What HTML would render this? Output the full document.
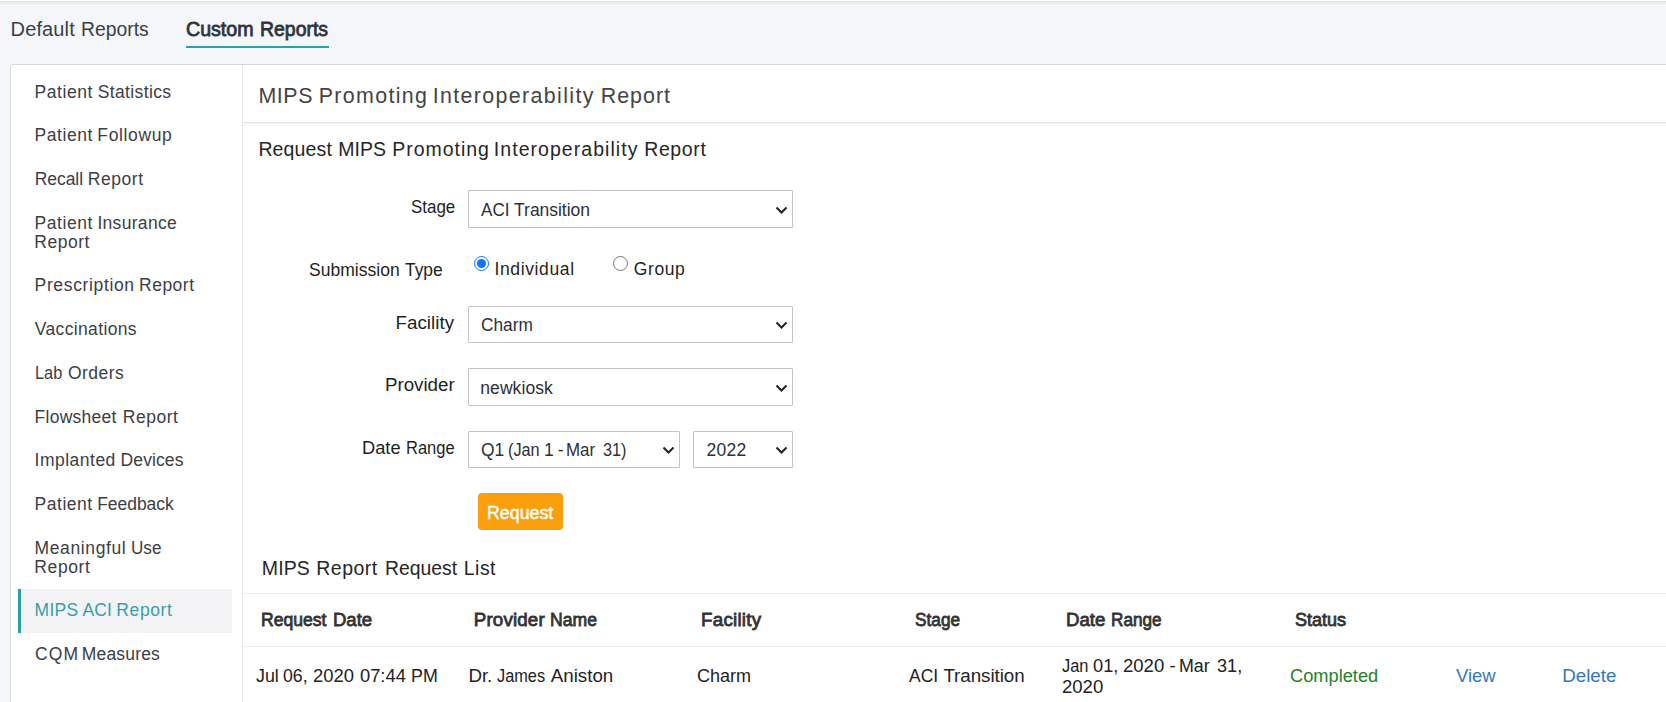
<!DOCTYPE html>
<html lang="en">
<head>
<meta charset="utf-8">
<title>MIPS Promoting Interoperability Report</title>
<style>
html,body{margin:0;padding:0}
body{width:1666px;height:702px;overflow:hidden;position:relative;background:#f4f6fa;font-family:"Liberation Sans",sans-serif}
.abs{position:absolute}
.t{position:absolute;white-space:nowrap;margin:0;padding:0;transform-origin:0 50%}
#topline{left:0;top:0;width:1666px;height:1px;background:#fff}
#topshadow{left:0;top:1px;width:1666px;height:3.5px;background:linear-gradient(#dddfe3,#e9ebef 45%,#f4f6fa)}
#tabline{left:186px;top:45.6px;width:143px;height:2.4px;background:#25a3a9}
#panel{left:10px;top:64px;width:1670px;height:660px;background:#fff;border:1px solid #d7d8da;border-radius:3px 0 0 0;box-sizing:border-box}
#sidediv{left:242px;top:65px;width:1px;height:640px;background:#e6e8eb}
#active{left:18px;top:589px;width:214px;height:44px;background:#f3f3f6;box-sizing:border-box;border-left:3px solid #27a0a6}
#hdrline{left:243px;top:122px;width:1423px;height:1px;background:#e4e4e5}
#hdrshadow{left:243px;top:123px;width:1423px;height:5px;background:linear-gradient(#f3f3f3,#f6f6f6 25%,#fafafa 50%,#fdfdfd 75%,#ffffff)}
.sel{position:absolute;box-sizing:border-box;border:1px solid #c3c3c3;border-radius:1px;background:#fff;height:38px}
.arr{position:absolute;width:13px;height:8px}
.radio{position:absolute;width:15px;height:15px;box-sizing:border-box;border-radius:50%;border:1px solid #767676;background:#fff}
.radio.on{border:1.5px solid #1473ff}
.radio.on::after{content:"";position:absolute;left:1.5px;top:1.5px;width:9px;height:9px;border-radius:50%;background:#1473ff}
#btn{left:478px;top:493px;width:85px;height:37px;background:#fb9f0c;border-radius:4px}
.tl{position:absolute;left:243px;width:1423px;height:1px;background:#ececec}
</style>
</head>
<body>
<div class="abs" id="topline"></div>
<div class="abs" id="topshadow"></div>
<div class="abs" id="tabline"></div>
<div class="abs" id="panel"></div>
<div class="abs" id="sidediv"></div>
<div class="abs" id="active"></div>
<div class="abs" id="hdrline"></div>
<div class="abs" id="hdrshadow"></div>

<div class="sel" style="left:468px;top:190px;width:325px"></div>
<div class="sel" style="left:468px;top:306px;width:325px;height:37px"></div>
<div class="sel" style="left:468px;top:368px;width:325px"></div>
<div class="sel" style="left:468px;top:431px;width:212px;height:37px"></div>
<div class="sel" style="left:693px;top:431px;width:100px;height:37px"></div>

<svg class="arr" style="left:774.5px;top:205.5px" viewBox="0 0 13 8"><path d="M1.5 1.5 L6.5 6.5 L11.5 1.5" fill="none" stroke="#222" stroke-width="2"/></svg>
<svg class="arr" style="left:774.5px;top:321px" viewBox="0 0 13 8"><path d="M1.5 1.5 L6.5 6.5 L11.5 1.5" fill="none" stroke="#222" stroke-width="2"/></svg>
<svg class="arr" style="left:774.5px;top:383.5px" viewBox="0 0 13 8"><path d="M1.5 1.5 L6.5 6.5 L11.5 1.5" fill="none" stroke="#222" stroke-width="2"/></svg>
<svg class="arr" style="left:661.7px;top:446px" viewBox="0 0 13 8"><path d="M1.5 1.5 L6.5 6.5 L11.5 1.5" fill="none" stroke="#222" stroke-width="2"/></svg>
<svg class="arr" style="left:774.5px;top:446px" viewBox="0 0 13 8"><path d="M1.5 1.5 L6.5 6.5 L11.5 1.5" fill="none" stroke="#222" stroke-width="2"/></svg>

<div class="radio on" style="left:474px;top:256px"></div>
<div class="radio" style="left:613px;top:256px"></div>

<div class="abs" id="btn"></div>

<div class="tl" style="top:593px"></div>
<div class="tl" style="top:646px"></div>

<nav class="g tabs">
<div class="g"><span class="t" style="left:10.60px;top:17.00px;font-size:20.000px;line-height:24px;font-weight:400;color:#3a3f47;letter-spacing:0.131px">Default</span> <span class="t" style="left:80.53px;top:17.00px;font-size:20.000px;line-height:24px;font-weight:400;color:#3a3f47;letter-spacing:0.000px;transform:scaleX(0.9663)">Reports</span></div>
<div class="g"><span class="t" style="left:186.02px;top:17.00px;font-size:20.000px;line-height:24px;font-weight:400;color:#2f343b;letter-spacing:0.000px;-webkit-text-stroke:0.8px #2f343b;transform:scaleX(0.9800)">Custom</span> <span class="t" style="left:259.53px;top:17.00px;font-size:20.000px;line-height:24px;font-weight:400;color:#2f343b;letter-spacing:0.000px;-webkit-text-stroke:0.8px #2f343b;transform:scaleX(0.9721)">Reports</span></div>
</nav>
<aside class="g sidebar">
<div class="g"><span class="t" style="left:34.60px;top:82.00px;font-size:17.500px;line-height:21px;font-weight:400;color:#3b3e44;letter-spacing:0.547px">Patient</span> <span class="t" style="left:97.70px;top:82.00px;font-size:17.500px;line-height:21px;font-weight:400;color:#3b3e44;letter-spacing:0.370px">Statistics</span></div>
<div class="g"><span class="t" style="left:34.60px;top:125.00px;font-size:17.500px;line-height:21px;font-weight:400;color:#3b3e44;letter-spacing:0.547px">Patient</span> <span class="t" style="left:97.30px;top:125.00px;font-size:17.500px;line-height:21px;font-weight:400;color:#3b3e44;letter-spacing:0.643px">Followup</span></div>
<div class="g"><span class="t" style="left:34.70px;top:169.00px;font-size:17.500px;line-height:21px;font-weight:400;color:#3b3e44;letter-spacing:-0.048px">Recall</span> <span class="t" style="left:87.80px;top:169.00px;font-size:17.500px;line-height:21px;font-weight:400;color:#3b3e44;letter-spacing:0.547px">Report</span></div>
<div class="g"><span class="t" style="left:34.60px;top:213.00px;font-size:17.500px;line-height:21px;font-weight:400;color:#3b3e44;letter-spacing:0.547px">Patient</span> <span class="t" style="left:97.40px;top:213.00px;font-size:17.500px;line-height:21px;font-weight:400;color:#3b3e44;letter-spacing:0.310px">Insurance</span></div>
<span class="t" style="left:34.30px;top:232.00px;font-size:17.500px;line-height:21px;font-weight:400;color:#3b3e44;letter-spacing:0.527px">Report</span>
<div class="g"><span class="t" style="left:34.60px;top:275.00px;font-size:17.500px;line-height:21px;font-weight:400;color:#3b3e44;letter-spacing:0.640px">Prescription</span> <span class="t" style="left:139.00px;top:275.00px;font-size:17.500px;line-height:21px;font-weight:400;color:#3b3e44;letter-spacing:0.507px">Report</span></div>
<span class="t" style="left:34.80px;top:319.00px;font-size:17.500px;line-height:21px;font-weight:400;color:#3b3e44;letter-spacing:0.348px">Vaccinations</span>
<div class="g"><span class="t" style="left:34.67px;top:363.00px;font-size:17.500px;line-height:21px;font-weight:400;color:#3b3e44;letter-spacing:0.000px;transform:scaleX(0.9321)">Lab</span> <span class="t" style="left:68.00px;top:363.00px;font-size:17.500px;line-height:21px;font-weight:400;color:#3b3e44;letter-spacing:0.453px">Orders</span></div>
<div class="g"><span class="t" style="left:34.60px;top:407.00px;font-size:17.500px;line-height:21px;font-weight:400;color:#3b3e44;letter-spacing:0.263px">Flowsheet</span> <span class="t" style="left:122.80px;top:407.00px;font-size:17.500px;line-height:21px;font-weight:400;color:#3b3e44;letter-spacing:0.507px">Report</span></div>
<div class="g"><span class="t" style="left:34.60px;top:450.00px;font-size:17.500px;line-height:21px;font-weight:400;color:#3b3e44;letter-spacing:0.485px">Implanted</span> <span class="t" style="left:120.60px;top:450.00px;font-size:17.500px;line-height:21px;font-weight:400;color:#3b3e44;letter-spacing:0.101px">Devices</span></div>
<div class="g"><span class="t" style="left:34.60px;top:494.00px;font-size:17.500px;line-height:21px;font-weight:400;color:#3b3e44;letter-spacing:0.513px">Patient</span> <span class="t" style="left:97.20px;top:494.00px;font-size:17.500px;line-height:21px;font-weight:400;color:#3b3e44;letter-spacing:-0.043px">Feedback</span></div>
<div class="g"><span class="t" style="left:34.60px;top:538.00px;font-size:17.500px;line-height:21px;font-weight:400;color:#3b3e44;letter-spacing:0.608px">Meaningful</span> <span class="t" style="left:130.62px;top:538.00px;font-size:17.500px;line-height:21px;font-weight:400;color:#3b3e44;letter-spacing:0.000px;transform:scaleX(0.9766)">Use</span></div>
<span class="t" style="left:34.30px;top:557.00px;font-size:17.500px;line-height:21px;font-weight:400;color:#3b3e44;letter-spacing:0.607px">Report</span>
<div class="g"><span class="t" style="left:34.60px;top:600.00px;font-size:17.500px;line-height:21px;font-weight:400;color:#3a9ea6;letter-spacing:0.229px">MIPS</span> <span class="t" style="left:82.50px;top:600.00px;font-size:17.500px;line-height:21px;font-weight:400;color:#3a9ea6;letter-spacing:0.045px">ACI</span> <span class="t" style="left:116.30px;top:600.00px;font-size:17.500px;line-height:21px;font-weight:400;color:#3a9ea6;letter-spacing:0.607px">Report</span></div>
<div class="g"><span class="t" style="left:35.00px;top:644.00px;font-size:17.500px;line-height:21px;font-weight:400;color:#3b3e44;letter-spacing:1.075px">CQM</span> <span class="t" style="left:81.80px;top:644.00px;font-size:17.500px;line-height:21px;font-weight:400;color:#3b3e44;letter-spacing:0.173px">Measures</span></div>
</aside>
<header class="g page-title">
<div class="g"><span class="t" style="left:258.40px;top:83.00px;font-size:21.400px;line-height:26px;font-weight:400;color:#444444;letter-spacing:0.590px">MIPS</span> <span class="t" style="left:318.70px;top:83.00px;font-size:21.400px;line-height:26px;font-weight:400;color:#444444;letter-spacing:1.338px">Promoting</span> <span class="t" style="left:432.70px;top:83.00px;font-size:21.400px;line-height:26px;font-weight:400;color:#444444;letter-spacing:1.366px">Interoperability</span> <span class="t" style="left:600.70px;top:83.00px;font-size:21.400px;line-height:26px;font-weight:400;color:#444444;letter-spacing:1.028px">Report</span></div>
</header>
<section class="g request-form">
<div class="g"><span class="t" style="left:258.40px;top:138.00px;font-size:19.500px;line-height:23px;font-weight:400;color:#262626;letter-spacing:0.131px">Request</span> <span class="t" style="left:338.30px;top:138.00px;font-size:19.500px;line-height:23px;font-weight:400;color:#262626;letter-spacing:0.044px">MIPS</span> <span class="t" style="left:392.30px;top:138.00px;font-size:19.500px;line-height:23px;font-weight:400;color:#262626;letter-spacing:0.959px">Promoting</span> <span class="t" style="left:493.80px;top:138.00px;font-size:19.500px;line-height:23px;font-weight:400;color:#262626;letter-spacing:1.050px">Interoperability</span> <span class="t" style="left:644.20px;top:138.00px;font-size:19.500px;line-height:23px;font-weight:400;color:#262626;letter-spacing:0.618px">Report</span></div>
<span class="t" style="left:410.70px;top:196.00px;font-size:18.750px;line-height:22px;font-weight:400;color:#1f1f1f;letter-spacing:0.000px;transform:scaleX(0.9038)">Stage</span>
<div class="g"><span class="t" style="left:309.00px;top:259.00px;font-size:18.750px;line-height:22px;font-weight:400;color:#1f1f1f;letter-spacing:0.000px;transform:scaleX(0.9358)">Submission</span> <span class="t" style="left:404.70px;top:259.00px;font-size:18.750px;line-height:22px;font-weight:400;color:#1f1f1f;letter-spacing:0.000px;transform:scaleX(0.9274)">Type</span></div>
<span class="t" style="left:395.40px;top:312.00px;font-size:18.750px;line-height:22px;font-weight:400;color:#1f1f1f;letter-spacing:0.063px">Facility</span>
<span class="t" style="left:385.00px;top:374.00px;font-size:18.750px;line-height:22px;font-weight:400;color:#1f1f1f;letter-spacing:-0.025px">Provider</span>
<div class="g"><span class="t" style="left:361.83px;top:437.00px;font-size:18.750px;line-height:22px;font-weight:400;color:#1f1f1f;letter-spacing:0.000px;transform:scaleX(0.9744)">Date</span> <span class="t" style="left:406.12px;top:437.00px;font-size:18.750px;line-height:22px;font-weight:400;color:#1f1f1f;letter-spacing:0.000px;transform:scaleX(0.8806)">Range</span></div>
<span class="t" style="left:494.50px;top:259.00px;font-size:17.500px;line-height:21px;font-weight:400;color:#1f1f1f;letter-spacing:0.628px">Individual</span>
<span class="t" style="left:633.70px;top:259.00px;font-size:17.500px;line-height:21px;font-weight:400;color:#1f1f1f;letter-spacing:0.624px">Group</span>
<div class="g"><span class="t" style="left:480.70px;top:200.00px;font-size:17.500px;line-height:21px;font-weight:400;color:#2d3036;letter-spacing:0.000px;transform:scaleX(0.9749)">ACI</span> <span class="t" style="left:514.10px;top:200.00px;font-size:17.500px;line-height:21px;font-weight:400;color:#2d3036;letter-spacing:-0.039px">Transition</span></div>
<span class="t" style="left:481.30px;top:315.00px;font-size:17.500px;line-height:21px;font-weight:400;color:#2d3036;letter-spacing:0.000px;transform:scaleX(0.9879)">Charm</span>
<span class="t" style="left:480.30px;top:378.00px;font-size:17.500px;line-height:21px;font-weight:400;color:#2d3036;letter-spacing:0.068px">newkiosk</span>
<div class="g"><span class="t" style="left:481.20px;top:440.00px;font-size:17.500px;line-height:21px;font-weight:400;color:#2d3036;letter-spacing:0.000px;transform:scaleX(0.9950)">Q1</span> <span class="t" style="left:508.37px;top:440.00px;font-size:17.500px;line-height:21px;font-weight:400;color:#2d3036;letter-spacing:0.000px;transform:scaleX(0.9285)">(Jan</span> <span class="t" style="left:544.00px;top:440.00px;font-size:17.500px;line-height:21px;font-weight:400;color:#2d3036;letter-spacing:0.000px">1</span> <span class="t" style="left:557.80px;top:440.00px;font-size:17.500px;line-height:21px;font-weight:400;color:#2d3036;letter-spacing:0.000px">-</span> <span class="t" style="left:566.13px;top:440.00px;font-size:17.500px;line-height:21px;font-weight:400;color:#2d3036;letter-spacing:0.000px;transform:scaleX(0.9655)">Mar</span> <span class="t" style="left:603.10px;top:440.00px;font-size:17.500px;line-height:21px;font-weight:400;color:#2d3036;letter-spacing:0.000px;transform:scaleX(0.9278)">31)</span></div>
<span class="t" style="left:706.40px;top:440.00px;font-size:17.500px;line-height:21px;font-weight:400;color:#2d3036;letter-spacing:0.267px">2022</span>
<span class="t" style="left:486.78px;top:502.00px;font-size:18.750px;line-height:22px;font-weight:400;color:#ffffff;letter-spacing:0.000px;-webkit-text-stroke:0.45px #ffffff;transform:scaleX(0.9486)">Request</span>
</section>
<section class="g request-list-head">
<div class="g"><span class="t" style="left:261.80px;top:557.00px;font-size:19.500px;line-height:23px;font-weight:400;color:#262626;letter-spacing:0.111px">MIPS</span> <span class="t" style="left:316.30px;top:557.00px;font-size:19.500px;line-height:23px;font-weight:400;color:#262626;letter-spacing:0.458px">Report</span> <span class="t" style="left:384.61px;top:557.00px;font-size:19.500px;line-height:23px;font-weight:400;color:#262626;letter-spacing:0.000px;transform:scaleX(0.9929)">Request</span> <span class="t" style="left:463.80px;top:557.00px;font-size:19.500px;line-height:23px;font-weight:400;color:#262626;letter-spacing:0.458px">List</span></div>
<div class="g"><span class="t" style="left:261.06px;top:609.00px;font-size:18.750px;line-height:22px;font-weight:400;color:#333333;letter-spacing:0.000px;-webkit-text-stroke:0.8px #333333;transform:scaleX(0.9379)">Request</span> <span class="t" style="left:333.01px;top:609.00px;font-size:18.750px;line-height:22px;font-weight:400;color:#333333;letter-spacing:0.000px;-webkit-text-stroke:0.8px #333333;transform:scaleX(0.9875)">Date</span></div>
<div class="g"><span class="t" style="left:473.80px;top:609.00px;font-size:18.750px;line-height:22px;font-weight:400;color:#333333;letter-spacing:0.147px;-webkit-text-stroke:0.8px #333333">Provider</span> <span class="t" style="left:550.36px;top:609.00px;font-size:18.750px;line-height:22px;font-weight:400;color:#333333;letter-spacing:0.000px;-webkit-text-stroke:0.8px #333333;transform:scaleX(0.9385)">Name</span></div>
<span class="t" style="left:701.10px;top:609.00px;font-size:18.750px;line-height:22px;font-weight:400;color:#333333;letter-spacing:0.234px;-webkit-text-stroke:0.8px #333333">Facility</span>
<span class="t" style="left:914.50px;top:609.00px;font-size:18.750px;line-height:22px;font-weight:400;color:#333333;letter-spacing:0.000px;-webkit-text-stroke:0.8px #333333;transform:scaleX(0.9203)">Stage</span>
<div class="g"><span class="t" style="left:1066.10px;top:609.00px;font-size:18.750px;line-height:22px;font-weight:400;color:#333333;letter-spacing:0.000px;-webkit-text-stroke:0.8px #333333;transform:scaleX(0.9953)">Date</span> <span class="t" style="left:1110.59px;top:609.00px;font-size:18.750px;line-height:22px;font-weight:400;color:#333333;letter-spacing:0.000px;-webkit-text-stroke:0.8px #333333;transform:scaleX(0.9141)">Range</span></div>
<span class="t" style="left:1294.70px;top:609.00px;font-size:18.750px;line-height:22px;font-weight:400;color:#333333;letter-spacing:0.000px;-webkit-text-stroke:0.8px #333333;transform:scaleX(0.9606)">Status</span>
</section>
<section class="g request-list-row">
<div class="g"><span class="t" style="left:256.20px;top:665.00px;font-size:18.750px;line-height:22px;font-weight:400;color:#222222;letter-spacing:0.000px;transform:scaleX(0.9516)">Jul</span> <span class="t" style="left:283.00px;top:665.00px;font-size:18.750px;line-height:22px;font-weight:400;color:#222222;letter-spacing:0.000px;transform:scaleX(0.9414)">06,</span> <span class="t" style="left:313.00px;top:665.00px;font-size:18.750px;line-height:22px;font-weight:400;color:#222222;letter-spacing:0.000px;transform:scaleX(0.9810)">2020</span> <span class="t" style="left:359.50px;top:665.00px;font-size:18.750px;line-height:22px;font-weight:400;color:#222222;letter-spacing:0.000px;transform:scaleX(0.9765)">07:44</span> <span class="t" style="left:410.55px;top:665.00px;font-size:18.750px;line-height:22px;font-weight:400;color:#222222;letter-spacing:0.000px;transform:scaleX(0.9507)">PM</span></div>
<div class="g"><span class="t" style="left:468.40px;top:665.00px;font-size:18.750px;line-height:22px;font-weight:400;color:#222222;letter-spacing:-0.025px">Dr.</span> <span class="t" style="left:496.90px;top:665.00px;font-size:18.750px;line-height:22px;font-weight:400;color:#222222;letter-spacing:0.000px;transform:scaleX(0.8715)">James</span> <span class="t" style="left:550.80px;top:665.00px;font-size:18.750px;line-height:22px;font-weight:400;color:#222222;letter-spacing:-0.019px">Aniston</span></div>
<span class="t" style="left:696.60px;top:665.00px;font-size:18.750px;line-height:22px;font-weight:400;color:#222222;letter-spacing:0.000px;transform:scaleX(0.9615)">Charm</span>
<div class="g"><span class="t" style="left:909.20px;top:665.00px;font-size:18.750px;line-height:22px;font-weight:400;color:#222222;letter-spacing:0.000px;transform:scaleX(0.9319)">ACI</span> <span class="t" style="left:943.40px;top:665.00px;font-size:18.750px;line-height:22px;font-weight:400;color:#222222;letter-spacing:-0.045px">Transition</span></div>
<div class="g"><span class="t" style="left:1061.60px;top:655.00px;font-size:18.750px;line-height:22px;font-weight:400;color:#222222;letter-spacing:0.000px;transform:scaleX(0.8758)">Jan</span> <span class="t" style="left:1093.20px;top:655.00px;font-size:18.750px;line-height:22px;font-weight:400;color:#222222;letter-spacing:0.000px;transform:scaleX(0.9736)">01,</span> <span class="t" style="left:1122.80px;top:655.00px;font-size:18.750px;line-height:22px;font-weight:400;color:#222222;letter-spacing:0.000px;transform:scaleX(0.9883)">2020</span> <span class="t" style="left:1169.60px;top:655.00px;font-size:18.750px;line-height:22px;font-weight:400;color:#222222;letter-spacing:0.000px">-</span> <span class="t" style="left:1178.85px;top:655.00px;font-size:18.750px;line-height:22px;font-weight:400;color:#222222;letter-spacing:0.000px;transform:scaleX(0.9502)">Mar</span> <span class="t" style="left:1216.50px;top:655.00px;font-size:18.750px;line-height:22px;font-weight:400;color:#222222;letter-spacing:0.000px;transform:scaleX(0.9656)">31,</span></div>
<span class="t" style="left:1061.60px;top:676.00px;font-size:18.750px;line-height:22px;font-weight:400;color:#222222;letter-spacing:0.000px;transform:scaleX(0.9883)">2020</span>
<span class="t" style="left:1289.50px;top:665.00px;font-size:18.750px;line-height:22px;font-weight:400;color:#23822b;letter-spacing:0.000px;transform:scaleX(0.9729)">Completed</span>
<span class="t" style="left:1456.40px;top:665.00px;font-size:18.750px;line-height:22px;font-weight:400;color:#337ab7;letter-spacing:0.000px;transform:scaleX(0.9838)">View</span>
<span class="t" style="left:1562.20px;top:665.00px;font-size:18.750px;line-height:22px;font-weight:400;color:#337ab7;letter-spacing:0.006px">Delete</span>
</section>
</body>
</html>
